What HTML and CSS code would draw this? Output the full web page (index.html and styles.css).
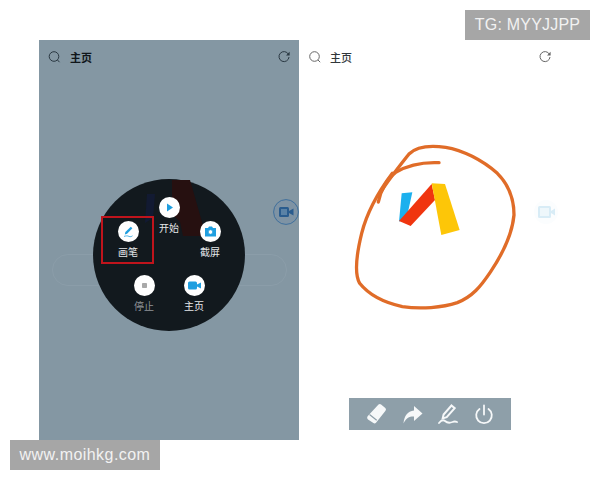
FILE: index.html
```html
<!DOCTYPE html>
<html lang="zh">
<head>
<meta charset="utf-8">
<title>画笔</title>
<link rel="stylesheet" href="styles.css">
</head>
<body>
<div class="tag tag-tg">TG: MYYJJPP</div>
<div class="stage">
  <section class="phone phone-dim">
    <header class="bar">
      <svg class="ico" viewBox="0 0 14 14"><circle cx="7" cy="6.500" r="4.800"/><path d="M10.500 10l2 2.200"/></svg>
      <span class="title">主页</span>
      <svg class="ico ico-end" viewBox="0 0 14 14"><path d="M11.400 4.200A5 5 0 1 0 12 7"/><path class="fill" d="M12.600 1.800v3.600H9z"/></svg>
    </header>
    <div class="ghost-pill"></div>
    <div class="float">
      <svg viewBox="0 0 26 26" width="26" height="26"><circle class="float-ring" cx="13" cy="13" r="12.400"/><rect class="float-cam" x="6" y="8" width="10" height="10" rx="1.500"/><rect class="float-cam-in" x="8" y="10" width="6" height="6"/><path class="float-cam" d="M16 12l4.500-2.600v7.200L16 14z"/></svg>
    </div>
    <div class="wheel">
      <svg class="wheel-ghost" viewBox="0 0 152 152" width="152" height="152"><path class="g-blue" d="M54 15h8l-2 24-8 5z"/><path class="g-red" d="M79 1h18l16 56H90l-3-14-8-8z"/></svg>
      <div class="item item-start"><span class="disc"><svg viewBox="0 0 21 21"><path class="blue" d="M8 6.500l6 4-6 4z"/></svg></span><span class="label">开始</span></div>
      <div class="item item-shot"><span class="disc"><svg viewBox="0 0 21 21"><path class="blue" d="M5 7h3l1-1.500h3L13 7h3v8.500H5z"/><circle class="white" cx="10.500" cy="11" r="2.300"/></svg></span><span class="label">截屏</span></div>
      <div class="item item-pen"><span class="disc"><svg viewBox="0 0 21 21"><path class="blue" d="M12.800 5.800l1.600 1.500-5.300 5.400-2.300.8.600-2.400z"/><path class="stroke-blue" d="M6 15.400c2-.6 3.500-.8 5 0 1.300.6 2.500.2 3.500-.6"/></svg></span><span class="label">画笔</span></div>
      <div class="item item-stop"><span class="disc"><svg viewBox="0 0 21 21"><rect class="grey" x="8" y="8" width="5" height="5" rx=".8"/></svg></span><span class="label label-dim">停止</span></div>
      <div class="item item-home"><span class="disc"><svg viewBox="0 0 21 21"><rect class="blue" x="4" y="6.500" width="9" height="8" rx="1.500"/><path class="blue" d="M13 9.500l4-2v6l-4-2z"/></svg></span><span class="label">主页</span></div>
    </div>
    <div class="highlight"></div>
  </section>
  <section class="phone">
    <header class="bar bar-light">
      <svg class="ico" viewBox="0 0 14 14"><circle cx="6.500" cy="6.500" r="4.800"/><path d="M10 10l2.200 2.200"/></svg>
      <span class="title">主页</span>
      <svg class="ico ico-end" viewBox="0 0 14 14"><path d="M11.400 4.200A5 5 0 1 0 12 7"/><path class="fill" d="M12.600 1.800v3.600H9z"/></svg>
    </header>
    <svg class="scribble" viewBox="0 0 630 540" width="210" height="180">
      <path class="logo-blue" d="M158 160l32-3-15 68-25 20z"/>
      <path class="logo-red" d="M248 132l10 48-73 78-35-15z"/>
      <path class="logo-yellow" d="M248 130l40 2 44 138-55 15z"/>
      <path class="ink" d="M270 68C225 66 175 76 140 97 115 115 95 150 88 186"/>
      <path class="ink" d="M90 165C110 130 150 80 180 42 200 22 240 15 290 22 340 30 400 60 445 100 480 135 495 180 495 225 490 280 465 335 425 395 395 440 370 470 325 488 280 503 215 508 160 500 105 488 60 465 32 430 15 400 22 345 38 280 52 225 85 160 130 100"/>
    </svg>
    <svg class="ghost-float" viewBox="0 0 26 26" width="26" height="26"><circle class="ghost-ring" cx="13" cy="13" r="12"/><rect class="ghost-cam" x="5" y="7" width="13" height="12" rx="1.500"/><rect class="ghost-in" x="7" y="9" width="9" height="8"/><path class="ghost-cam" d="M18 12l4-2.500v7L18 14z"/></svg>
    <nav class="tools">
      <svg class="tool" viewBox="0 0 22 22"><path class="tool-fill" d="M13.500 1.500a2 2 0 0 1 2.600 0l4.200 3.500a2 2 0 0 1 .2 2.700l-9.500 12a2 2 0 0 1-2.600.3L3 16.500a2.500 2.500 0 0 1-.4-3.300z"/><path class="tool-cut" d="M4.500 11.500l7.200 5.800"/></svg>
      <svg class="tool" viewBox="0 0 22 22"><path class="tool-fill" d="M13 3l8.500 7.500-8.500 7.500v-4.500c-4.500-.2-8 1.500-10.500 7 .5-7.500 4-12.200 10.500-13z"/></svg>
      <svg class="tool" viewBox="0 0 22 22"><path class="tool-pen" d="M14.500 2.500l3.200 2.700-8 9-4 1.200.9-3.900z"/><path class="tool-line" d="M2 20c2-2.500 4-3.500 6-2 2 1.800 4.500 2.300 7.500 1 1.500-.7 3-.7 4.500 0"/></svg>
      <svg class="tool" viewBox="0 0 22 22"><path class="tool-line" d="M11 2.500v9"/><path class="tool-line" d="M6.500 6A7.800 7.800 0 1 0 15.500 6"/></svg>
    </nav>
  </section>
</div>
<div class="tag tag-site">www.moihkg.com</div>
</body>
</html>
```
FILE: styles.css
```css
* { box-sizing: border-box; }
html, body { margin: 0; padding: 0; }
body {
  position: relative;
  width: 600px;
  height: 480px;
  overflow: hidden;
  background: #fff;
  font-family: "Noto Sans CJK SC", "Liberation Sans", sans-serif;
}
.stage {
  display: flex;
  padding: 40px 0 0 39px;
}
.phone {
  position: relative;
  width: 260px;
  height: 400px;
  background: #fff;
}
.phone-dim { background: #8497a3; }
.bar {
  display: flex;
  align-items: center;
  height: 34px;
  padding: 0 8px;
  color: #10161a;
}
.bar-light { padding-left: 9px; color: #30363a; }
.ico {
  width: 14px;
  height: 14px;
  fill: none;
  stroke: #2a3842;
  stroke-width: 1;
  flex: none;
}
.bar-light .ico { stroke: #666; }
.ico .fill { fill: #2a3842; stroke: none; }
.bar-light .ico .fill { fill: #666; }
.title {
  margin-left: 9px;
  font-size: 11px;
  font-weight: 700;
  line-height: 14px;
}
.bar-light .title { margin-left: 8px; font-weight: 500; }
.ico-end { margin-left: auto; }
.bar .ico-end { margin-right: 0; }
.bar-light .ico-end { margin-right: -1px; }
.ghost-pill {
  position: absolute;
  left: 13px;
  top: 214px;
  width: 235px;
  height: 32px;
  border: 1px solid #8b9da9;
  border-radius: 16px;
}
.float {
  position: absolute;
  left: 234px;
  top: 159px;
  width: 26px;
  height: 26px;
}
.float svg { display: block; }
.float-ring { fill: #7e93a4; stroke: #3f6f9c; stroke-width: 1; }
.float-cam { fill: #2a5c8e; }
.float-cam-in { fill: #5a82a6; }
.wheel {
  position: absolute;
  left: 54px;
  top: 139px;
  width: 152px;
  height: 152px;
  border-radius: 50%;
  background: #12191e;
}
.wheel-ghost { position: absolute; left: 0; top: 0; }
.g-blue { fill: #121a32; }
.g-red { fill: #261010; }
.item {
  position: absolute;
  display: flex;
  flex-direction: column;
  align-items: center;
  gap: 2px;
  width: 40px;
}
.item-start { left: 56px; top: 18px; }
.item-shot { left: 97px; top: 42px; }
.item-pen { left: 15px; top: 42px; }
.item-stop { left: 31px; top: 96px; }
.item-home { left: 81px; top: 96px; }
.disc {
  display: block;
  width: 21px;
  height: 21px;
  border-radius: 50%;
  background: #fff;
}
.disc svg { display: block; width: 21px; height: 21px; }
.blue { fill: #1f9fe0; }
.white { fill: #fff; stroke: #1f9fe0; stroke-width: .8; }
.stroke-blue { fill: none; stroke: #1f9fe0; stroke-width: .8; }
.grey { fill: #a9a9a9; }
.label {
  font-size: 10px;
  line-height: 16px;
  color: #e6e8ea;
  white-space: nowrap;
}
.label-dim { color: #8f9498; }
.highlight {
  position: absolute;
  left: 62px;
  top: 176px;
  width: 53px;
  height: 48px;
  border: 2px solid #c0141c;
}
.scribble {
  position: absolute;
  left: 50px;
  top: 100px;
}
.logo-blue { fill: #1cb0ee; }
.logo-red { fill: #f0350f; }
.logo-yellow { fill: #fdc608; }
.ink {
  fill: none;
  stroke: #e06c28;
  stroke-width: 10;
  stroke-linecap: round;
  stroke-linejoin: round;
}
.ghost-float {
  position: absolute;
  left: 234px;
  top: 159px;
}
.ghost-ring { fill: #fbfdfe; }
.ghost-cam { fill: #d8ecf6; }
.ghost-in { fill: #eef7fb; }
.tools {
  position: absolute;
  left: 50px;
  top: 358px;
  display: flex;
  justify-content: space-between;
  align-items: center;
  width: 162px;
  height: 32px;
  padding: 0 16px;
  background: #8e9fa9;
}
.tool {
  width: 22px;
  height: 22px;
  flex: none;
}
.tool-fill { fill: #f6f8f9; }
.tool-cut { fill: none; stroke: #8e9fa9; stroke-width: 1.200; }
.tool-pen { fill: none; stroke: #f6f8f9; stroke-width: 2; }
.tool-line { fill: none; stroke: #f6f8f9; stroke-width: 1.800; stroke-linecap: round; }
.tag {
  position: absolute;
  display: flex;
  align-items: center;
  justify-content: center;
  height: 30px;
  background: #a6a6a6;
  color: #f2f2f2;
  font-family: "Liberation Sans", Arial, sans-serif;
  font-size: 16px;
}
.tag-tg { left: 465px; top: 10px; width: 125px; letter-spacing: .2px; }
.tag-site { left: 10px; top: 440px; width: 150px; letter-spacing: .45px; }
```
